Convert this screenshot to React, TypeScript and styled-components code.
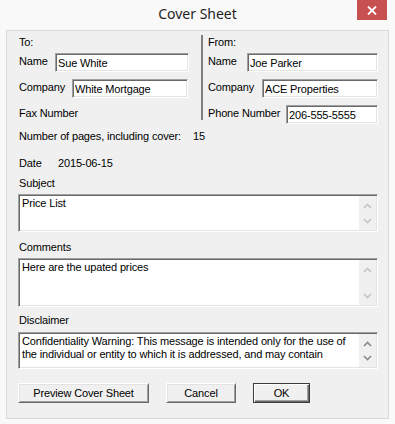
import React from "react";
import styled, { createGlobalStyle } from "styled-components";

const GlobalStyle = createGlobalStyle`
  html, body {
    margin: 0;
    padding: 0;
    background: #f9f9f9;
  }
  body {
    font-family: "Liberation Sans", Arial, sans-serif;
    font-size: 11px;
    letter-spacing: -0.15px;
    color: #000;
  }
`;

const Window = styled.div`
  width: 395px;
  height: 424px;
  display: flex;
  flex-direction: column;
  background: #f9f9f9;
  box-sizing: border-box;
`;

const TitleBar = styled.div`
  height: 30px;
  display: grid;
  grid-template-columns: 1fr auto 1fr;
  align-items: start;
`;

const Title = styled.div`
  grid-column: 2;
  font-family: "Noto Sans", "Open Sans", sans-serif;
  font-size: 14px;
  letter-spacing: 0;
  line-height: 20px;
  padding-top: 4px;
  color: #1e1e1e;
`;

const CloseButton = styled.div`
  grid-column: 3;
  justify-self: end;
  margin-right: 8px;
  width: 30px;
  height: 20px;
  background: #c75050;
  display: flex;
  align-items: center;
  justify-content: center;
`;

const Client = styled.div`
  margin: 0 6px;
  height: 389px;
  box-sizing: border-box;
  border: 1px solid #d9d9d9;
  background: #f0f0f0;
  padding: 5px 10px 0 11px;
  display: flex;
  flex-direction: column;
`;

const Parties = styled.div`
  display: flex;
  align-items: flex-start;
`;

const Party = styled.div<{ $right?: boolean }>`
  display: flex;
  flex-direction: column;
  width: ${(p) => (p.$right ? "auto" : "182px")};
  flex: ${(p) => (p.$right ? "1" : "none")};
  padding-left: ${(p) => (p.$right ? "5px" : "1px")};
`;

const Divider = styled.div`
  width: 2px;
  height: 85px;
  margin-top: -1px;
  background: #7f7f7f;
`;

const Heading = styled.div`
  height: 13px;
  line-height: 13px;
`;

const FieldRow = styled.div<{ $first?: boolean }>`
  display: flex;
  align-items: center;
  height: 19px;
  margin-top: ${(p) => (p.$first ? "4px" : "7px")};
`;

const FieldLabel = styled.div<{ $w?: number }>`
  width: ${(p) => (p.$w ? `${p.$w}px` : "auto")};
  flex: none;
  line-height: 13px;
  margin-top: -2px;
  white-space: nowrap;
`;

const TextInput = styled.input<{ $w: number }>`
  width: ${(p) => p.$w}px;
  height: 19px;
  box-sizing: border-box;
  margin: 0;
  padding: 0 2px;
  font-family: "Liberation Sans", Arial, sans-serif;
  font-size: 11px;
  letter-spacing: -0.15px;
  color: #000;
  background: #fff;
  border: 1px solid;
  border-color: #a0a0a0 #ffffff #ffffff #a0a0a0;
  box-shadow: inset 1px 1px 0 #696969, inset -1px -1px 0 #e3e3e3;
  outline: none;
`;

const InfoRow = styled.div<{ $gap: number }>`
  display: flex;
  height: 13px;
  line-height: 13px;
  margin-top: ${(p) => p.$gap}px;
  padding-left: 1px;
`;

const InfoLabel = styled.span<{ $w: number }>`
  width: ${(p) => p.$w}px;
  flex: none;
`;

const SectionLabel = styled.div<{ $gap: number }>`
  height: 13px;
  line-height: 13px;
  margin-top: ${(p) => p.$gap}px;
  padding-left: 1px;
`;

const TextBox = styled.div<{ $h: number; $gap: number }>`
  width: 360px;
  height: ${(p) => p.$h}px;
  margin-top: ${(p) => p.$gap}px;
  box-sizing: border-box;
  display: flex;
  background: #fff;
  border: 1px solid;
  border-color: #a0a0a0 #ffffff #ffffff #a0a0a0;
  box-shadow: inset 1px 1px 0 #696969, inset -1px -1px 0 #e3e3e3;
  padding: 1px;
`;

const BoxText = styled.div`
  flex: 1;
  padding: 1px 2px 0 2px;
  line-height: 13px;
  overflow: hidden;
`;

const ScrollTrack = styled.div`
  width: 17px;
  flex: none;
  background: #f0f0f0;
  display: flex;
  flex-direction: column;
  justify-content: space-between;
  align-items: center;
  padding: 7px 0 6px;
  box-sizing: border-box;
`;

const ButtonRow = styled.div`
  display: flex;
  gap: 17px;
  margin-top: 14px;
`;

const Button = styled.div<{ $w: number; $default?: boolean }>`
  width: ${(p) => p.$w}px;
  height: 20px;
  box-sizing: border-box;
  display: flex;
  align-items: center;
  justify-content: center;
  background: #f0f0f0;
  line-height: 13px;
  border: 1px solid;
  border-color: ${(p) =>
    p.$default ? "#3c3c3c" : "#ffffff #696969 #696969 #ffffff"};
  box-shadow: ${(p) =>
    p.$default
      ? "inset 1px 1px 0 #fff, inset -1px -1px 0 #696969, inset -2px -2px 0 #a0a0a0"
      : "inset 1px 1px 0 #e3e3e3, inset -1px -1px 0 #a0a0a0"};
`;

const Chevron = ({ up, active }: { up?: boolean; active?: boolean }) => (
  <svg width="9" height="6" viewBox="0 0 9 6">
    <polyline
      points={up ? "1,5 4.5,1.5 8,5" : "1,1 4.5,4.5 8,1"}
      fill="none"
      stroke={active ? "#8a8a8a" : "#c4c4c4"}
      strokeWidth="1.6"
    />
  </svg>
);

const Scroll = ({ active }: { active?: boolean }) => (
  <ScrollTrack>
    <Chevron up active={active} />
    <Chevron active={active} />
  </ScrollTrack>
);

export default function App() {
  return (
    <Window>
      <GlobalStyle />
      <TitleBar>
        <Title>Cover Sheet</Title>
        <CloseButton>
          <svg width="10" height="9" viewBox="0 0 10 9">
            <path d="M1 0.5 L9 8.5 M9 0.5 L1 8.5" stroke="#fff" strokeWidth="1.8" />
          </svg>
        </CloseButton>
      </TitleBar>
      <Client>
        <Parties>
          <Party>
            <Heading>To:</Heading>
            <FieldRow $first>
              <FieldLabel $w={36}>Name</FieldLabel>
              <TextInput $w={134} readOnly value="Sue White" />
            </FieldRow>
            <FieldRow>
              <FieldLabel $w={53}>Company</FieldLabel>
              <TextInput $w={116} readOnly value="White Mortgage" />
            </FieldRow>
            <FieldRow>
              <FieldLabel>Fax Number</FieldLabel>
            </FieldRow>
          </Party>
          <Divider />
          <Party $right>
            <Heading>From:</Heading>
            <FieldRow $first>
              <FieldLabel $w={39}>Name</FieldLabel>
              <TextInput $w={131} readOnly value="Joe Parker" />
            </FieldRow>
            <FieldRow>
              <FieldLabel $w={54}>Company</FieldLabel>
              <TextInput $w={116} readOnly value="ACE Properties" />
            </FieldRow>
            <FieldRow>
              <FieldLabel $w={78}>Phone Number</FieldLabel>
              <TextInput $w={92} readOnly value="206-555-5555" />
            </FieldRow>
          </Party>
        </Parties>
        <InfoRow $gap={6}>
          <InfoLabel $w={174}>Number of pages, including cover:</InfoLabel>
          <span>15</span>
        </InfoRow>
        <InfoRow $gap={14}>
          <InfoLabel $w={39}>Date</InfoLabel>
          <span>2015-06-15</span>
        </InfoRow>
        <SectionLabel $gap={7}>Subject</SectionLabel>
        <TextBox $h={38} $gap={4}>
          <BoxText>Price List</BoxText>
          <Scroll />
        </TextBox>
        <SectionLabel $gap={9}>Comments</SectionLabel>
        <TextBox $h={49} $gap={4}>
          <BoxText>Here are the upated prices</BoxText>
          <Scroll />
        </TextBox>
        <SectionLabel $gap={7}>Disclaimer</SectionLabel>
        <TextBox $h={37} $gap={5}>
          <BoxText>
            Confidentiality Warning: This message is intended only for the use of the
            individual or entity to which it is addressed, and may contain
          </BoxText>
          <Scroll active />
        </TextBox>
        <ButtonRow>
          <Button $w={131}>Preview Cover Sheet</Button>
          <Button $w={70}>Cancel</Button>
          <Button $w={57} $default>
            OK
          </Button>
        </ButtonRow>
      </Client>
    </Window>
  );
}
